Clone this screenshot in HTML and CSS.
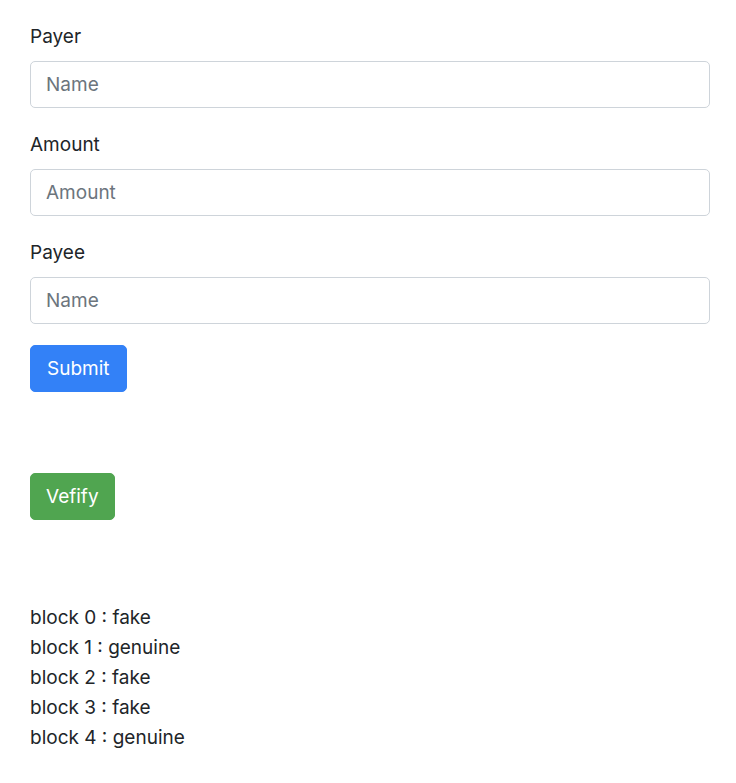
FILE: index.html
```html
<!DOCTYPE html>
<html lang="en">
<head>
    <meta charset="UTF-8">
    <meta name="viewport" content="width=device-width, initial-scale=1.0">
    <title>Blockchain Demo</title>
    <link rel="stylesheet" href="styles.css">
</head>
<body>
    <div class="container">
        <form class="tx-form">
            <div class="form-group">
                <label for="payer">Payer</label>
                <input type="text" id="payer" class="form-control" placeholder="Name">
            </div>
            <div class="form-group">
                <label for="amount">Amount</label>
                <input type="text" id="amount" class="form-control" placeholder="Amount">
            </div>
            <div class="form-group">
                <label for="payee">Payee</label>
                <input type="text" id="payee" class="form-control" placeholder="Name">
            </div>
            <button type="button" class="btn btn-primary">Submit</button>
        </form>

        <div class="verify">
            <button type="button" class="btn btn-success">Vefify</button>
        </div>

        <div class="results">
            <div>block 0 : fake</div>
            <div>block 1 : genuine</div>
            <div>block 2 : fake</div>
            <div>block 3 : fake</div>
            <div>block 4 : genuine</div>
        </div>
    </div>
</body>
</html>
```

FILE: styles.css
```css
body {
    margin: 0;
    padding: 0;
    font-family: Inter, "Liberation Sans", Arial, sans-serif;
    font-size: 19px;
    line-height: 30px;
    color: #212529;
    background-color: #fff;
}

.container {
    padding: 21px 26px 0 30px;
}

.form-group {
    margin-bottom: 21px;
}

label {
    display: block;
    margin-bottom: 10px;
    padding-top: 1px;
    line-height: 29px;
}

.form-control {
    display: block;
    box-sizing: border-box;
    width: 100%;
    height: 47px;
    padding: 7px 15px;
    font-family: inherit;
    font-size: 19px;
    line-height: 30px;
    color: #495057;
    border: 1.25px solid #ced4da;
    border-radius: 5px;
    background-color: #fff;
}

.form-control::placeholder {
    color: #6c757d;
}

.btn {
    display: inline-block;
    box-sizing: border-box;
    height: 47px;
    padding: 7px 15px;
    font-family: inherit;
    font-size: 19px;
    line-height: 30px;
    color: #fff;
    border: 1.25px solid transparent;
    border-radius: 5px;
    cursor: pointer;
}

.btn-primary {
    padding: 7px 16px;
    background-color: #3381f7;
    border-color: #3381f7;
}

.btn-success {
    background-color: #50a550;
    border-color: #50a550;
}

.verify {
    margin-top: 81px;
}

.results {
    margin-top: 83px;
}
```
